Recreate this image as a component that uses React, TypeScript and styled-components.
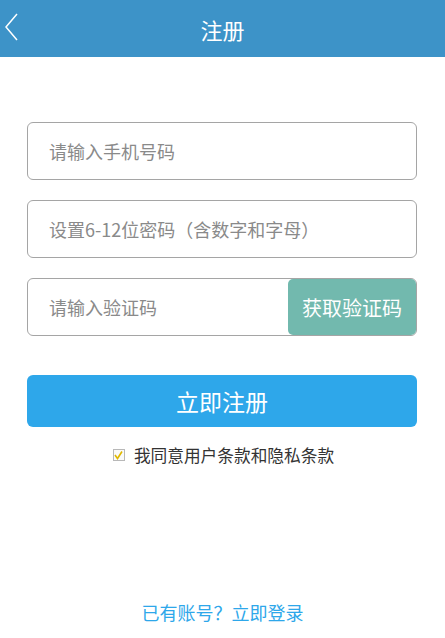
import React from "react";
import styled, { createGlobalStyle } from "styled-components";

const Global = createGlobalStyle`
  html, body { margin: 0; padding: 0; background: #fff; }
  body { font-family: "Noto Sans CJK SC", "Noto Sans", sans-serif; }
  * { box-sizing: border-box; }
`;

const Page = styled.div`
  width: 445px;
  height: 638px;
  display: flex;
  flex-direction: column;
  background: #fff;
`;

const Header = styled.header`
  height: 57px;
  background: #3d93c8;
  display: flex;
  align-items: center;
  justify-content: center;
  position: relative;
`;

const Back = styled.div`
  position: absolute;
  left: 4px;
  top: 13px;
  width: 16px;
  height: 28px;
  display: flex;
`;

const Title = styled.h1`
  margin: 0;
  color: #fff;
  font-size: 22px;
  font-weight: 400;
  line-height: 1;
`;

const Form = styled.div`
  padding: 65px 28px 0 27px;
  display: flex;
  flex-direction: column;
  gap: 20px;
`;

const Field = styled.div`
  height: 58px;
  border: 1px solid #a5a5a5;
  border-radius: 6px;
  display: flex;
  align-items: stretch;
  overflow: hidden;
`;

const Input = styled.input`
  flex: 1;
  min-width: 0;
  border: none;
  outline: none;
  padding: 0 0 0 21px;
  font-family: "Noto Sans CJK SC", "Noto Sans", sans-serif;
  font-size: 18px;
  color: #333;
  background: transparent;
  &::placeholder { color: #8a8a8a; }
`;

const CodeButton = styled.button`
  width: 128px;
  border: none;
  background: #72b9ae;
  color: #fff;
  font-family: "Noto Sans CJK SC", "Noto Sans", sans-serif;
  font-size: 20px;
  padding: 0;
  border-radius: 5px 0 0 5px;
`;

const Submit = styled.button`
  margin: 39px 28px 0 27px;
  height: 52px;
  border: none;
  border-radius: 6px;
  background: #2ea7ea;
  color: #fff;
  font-family: "Noto Sans CJK SC", "Noto Sans", sans-serif;
  font-size: 23px;
`;

const Agree = styled.label`
  margin-top: 16px;
  display: flex;
  align-items: center;
  justify-content: center;
  gap: 9px;
  font-size: 16.7px;
  color: #333;
  padding-left: 2px;
`;

const Box = styled.span`
  width: 12px;
  height: 12px;
  border: 1px solid #b8b8b8;
  background: #fafafa;
  display: flex;
  align-items: center;
  justify-content: center;
`;

const Spacer = styled.div`
  flex: 1;
`;

const Login = styled.a`
  text-align: center;
  color: #2ea7ea;
  font-size: 18px;
  padding-bottom: 13px;
  text-decoration: none;
`;

export default function App() {
  return (
    <>
      <Global />
      <Page>
        <Header>
          <Back>
            <svg width="16" height="28" viewBox="0 0 16 28">
              <polyline points="13,1 2,14 13,27" fill="none" stroke="#fff" strokeWidth="1.5" />
            </svg>
          </Back>
          <Title>注册</Title>
        </Header>
        <Form>
          <Field>
            <Input placeholder="请输入手机号码" />
          </Field>
          <Field>
            <Input placeholder="设置6-12位密码（含数字和字母）" />
          </Field>
          <Field>
            <Input placeholder="请输入验证码" />
            <CodeButton>获取验证码</CodeButton>
          </Field>
        </Form>
        <Submit>立即注册</Submit>
        <Agree>
          <Box>
            <svg width="9" height="9" viewBox="0 0 9 9">
              <polyline points="1,4 3.5,7.5 8,0.5" fill="none" stroke="#e0b800" strokeWidth="1.6" />
            </svg>
          </Box>
          我同意用户条款和隐私条款
        </Agree>
        <Spacer />
        <Login href="#">已有账号？立即登录</Login>
      </Page>
    </>
  );
}
